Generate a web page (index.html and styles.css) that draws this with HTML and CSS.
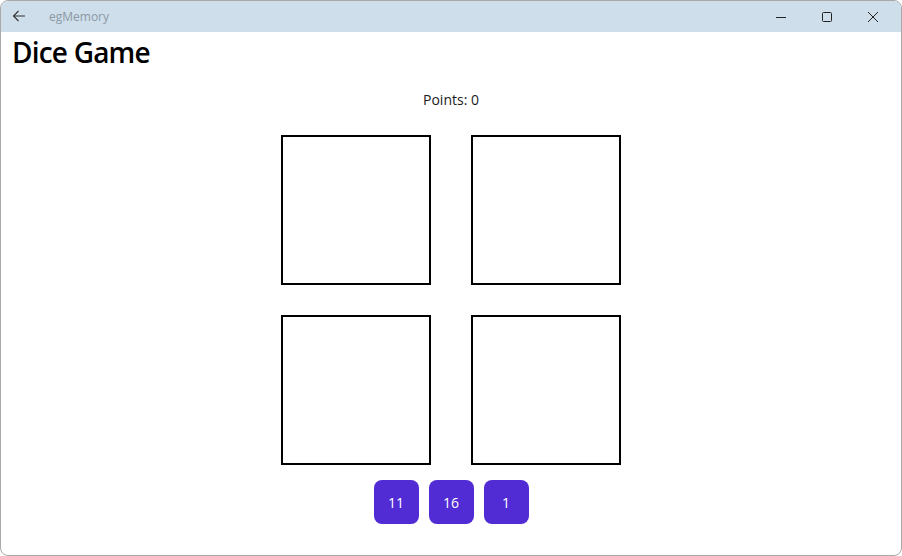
FILE: index.html
```html
<!DOCTYPE html>
<html>
<head>
<meta charset="utf-8">
<title>egMemory</title>
<link rel="stylesheet" href="styles.css">
</head>
<body>
<div class="window">
  <div class="titlebar">
    <div class="tb-left">
      <svg class="back" width="14" height="12" viewBox="0 0 14 12"><path d="M13 6H1.5M6.5 1L1.5 6L6.5 11" fill="none" stroke="#333" stroke-width="1.1"/></svg>
      <span class="app-name">egMemory</span>
    </div>
    <div class="tb-right">
      <div class="ctl"><svg width="12" height="12" viewBox="0 0 12 12"><path d="M1 6.5H11" stroke="#222" stroke-width="1"/></svg></div>
      <div class="ctl"><svg width="12" height="12" viewBox="0 0 12 12"><rect x="1.5" y="1.5" width="9" height="9" rx="1" fill="none" stroke="#222" stroke-width="1"/></svg></div>
      <div class="ctl"><svg width="12" height="12" viewBox="0 0 12 12"><path d="M1 1L11 11M11 1L1 11" stroke="#222" stroke-width="1"/></svg></div>
    </div>
  </div>
  <div class="content">
    <h1 class="page-title">Dice Game</h1>
    <div class="points">Points: 0</div>
    <div class="board">
      <div class="die"></div>
      <div class="die"></div>
      <div class="die"></div>
      <div class="die"></div>
    </div>
    <div class="buttons">
      <button class="btn">11</button>
      <button class="btn">16</button>
      <button class="btn">1</button>
    </div>
  </div>
</div>
</body>
</html>
```
FILE: styles.css
```css
html, body {
  margin: 0;
  padding: 0;
  background: #ffffff;
}
.window {
  box-sizing: border-box;
  width: 902px;
  height: 556px;
  border: 1px solid #a9a9a9;
  border-radius: 8px;
  overflow: hidden;
  background: #ffffff;
  font-family: "Open Sans", "Noto Sans", sans-serif;
  display: flex;
  flex-direction: column;
}
.titlebar {
  height: 31px;
  background: #cedeeb;
  display: flex;
  align-items: center;
  justify-content: space-between;
  flex-shrink: 0;
}
.tb-left {
  display: flex;
  align-items: center;
}
.back {
  margin-left: 11px;
  margin-top: -1px;
}
.app-name {
  margin-left: 23px;
  font-size: 12px;
  color: #8c98a4;
}
.tb-right {
  display: flex;
  align-items: center;
  margin-right: 5px;
}
.ctl {
  width: 46px;
  height: 31px;
  display: flex;
  align-items: center;
  justify-content: center;
}
.content {
  display: flex;
  flex-direction: column;
  align-items: center;
}
.page-title {
  align-self: flex-start;
  margin: 0;
  padding-left: 11px;
  font-size: 28px;
  font-weight: 600;
  letter-spacing: -0.8px;
  line-height: 40px;
  color: #000;
}
.points {
  margin-top: 18px;
  font-size: 14px;
  line-height: 20px;
  color: #1a1a1a;
}
.board {
  margin-top: 25px;
  display: grid;
  grid-template-columns: 150px 150px;
  grid-auto-rows: 150px;
  column-gap: 40px;
  row-gap: 30px;
}
.die {
  box-sizing: border-box;
  border: 2px solid #000;
  background: #fff;
}
.buttons {
  margin-top: 15px;
  display: flex;
  gap: 10px;
}
.btn {
  width: 45px;
  height: 44px;
  border: none;
  border-radius: 8px;
  background: #512bd4;
  color: #fff;
  font-family: "Open Sans", "Noto Sans", sans-serif;
  font-size: 14px;
  padding: 0;
}
```
